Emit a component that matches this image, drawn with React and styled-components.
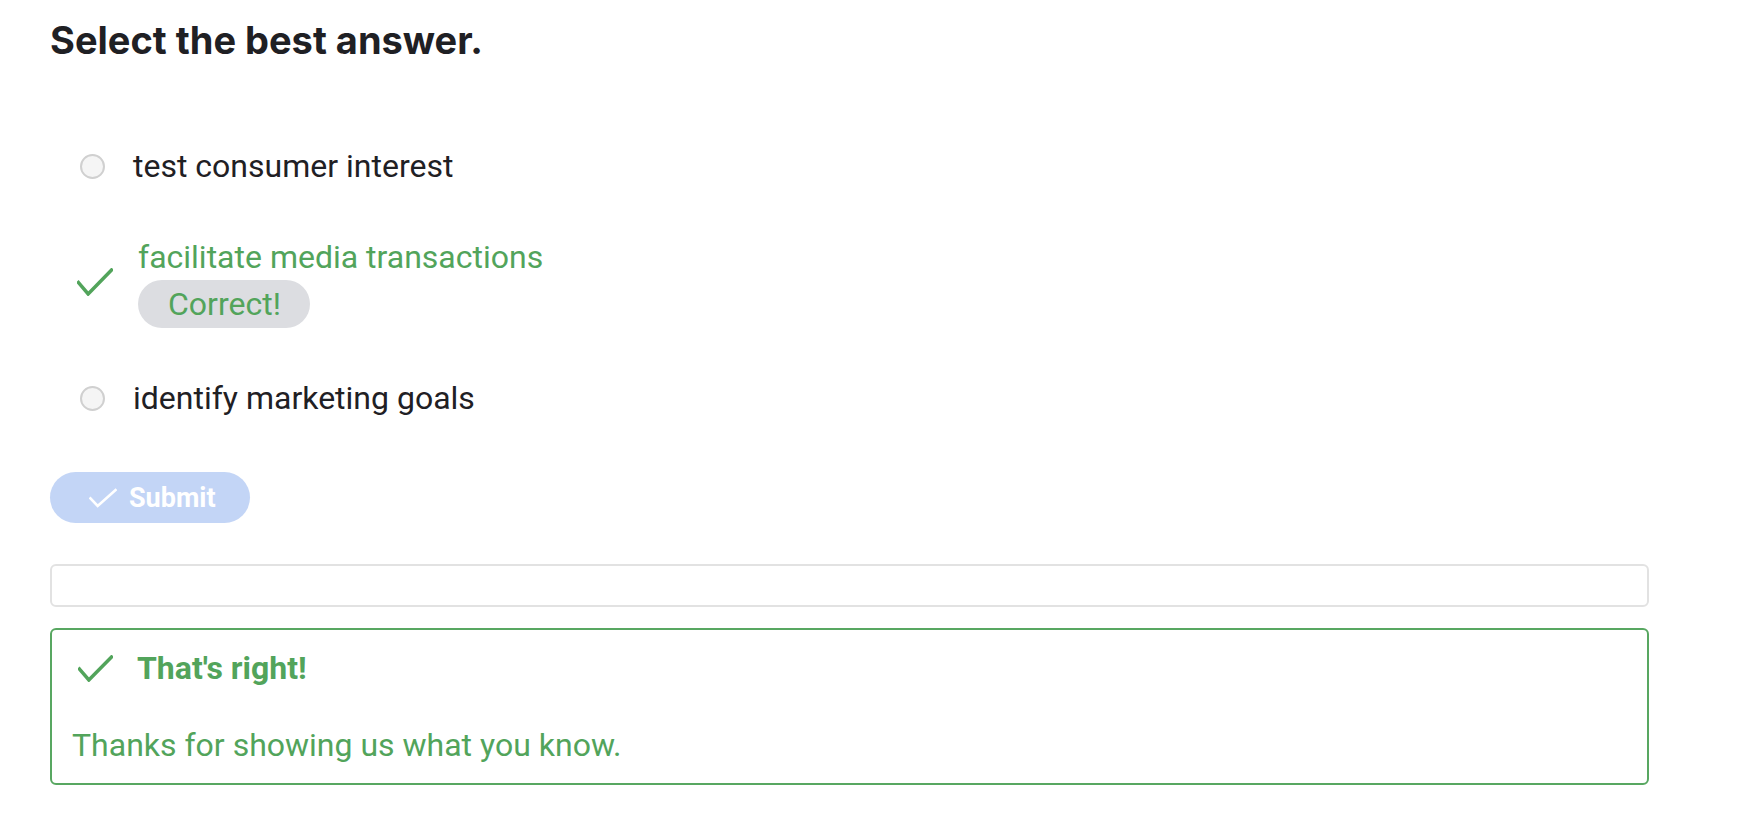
import React from 'react'
import styled, { createGlobalStyle } from 'styled-components'

const colors = {
    text: '#1f2024',
    green: '#52a45b',
    greenBorder: '#58a761',
    pill: '#dcdde1',
    submit: '#c3d5f6',
    radioBorder: '#d0d0d0',
    radioFill: '#f5f5f5',
    inputBorder: '#e2e2e2',
}

const GlobalStyles = createGlobalStyle`
    * {
        box-sizing: border-box;
        margin: 0;
        padding: 0;
    }
    body {
        background: #ffffff;
        color: ${colors.text};
        font-family: Roboto, 'Liberation Sans', sans-serif;
    }
`

const Page = styled.main`
    width: 1650px;
    padding: 18px 0 40px 50px;
`

const Heading = styled.h2`
    font-family: Inter, 'Liberation Sans', sans-serif;
    font-size: 38px;
    line-height: 44px;
    font-weight: 700;
    color: ${colors.text};
`

const Options = styled.ul`
    list-style: none;
    display: flex;
    flex-direction: column;
    gap: 52px;
    margin-top: 86px;
    padding-left: 30px;
`

const Option = styled.li`
    display: flex;
    align-items: center;
`

const Radio = styled.span`
    width: 25px;
    height: 25px;
    border-radius: 50%;
    border: 2px solid ${colors.radioBorder};
    background: ${colors.radioFill};
    margin-right: 28px;
    flex-shrink: 0;
`

const Mark = styled.span`
    display: flex;
    margin: 0 25px 0 -3px;
    flex-shrink: 0;
`

const Answer = styled.div`
    display: flex;
    flex-direction: column;
    align-items: flex-start;
`

const Label = styled.span`
    margin-top: ${props => props.$correct ? '3px' : '0'};
    font-size: 32px;
    line-height: 36px;
    color: ${props => props.$correct ? colors.green : colors.text};
`

const Pill = styled.span`
    margin-top: 5px;
    height: 48px;
    padding: 0 29px 0 30px;
    border-radius: 24px;
    background: ${colors.pill};
    color: ${colors.green};
    font-size: 32px;
    line-height: 48px;
`

const SubmitButton = styled.button`
    display: flex;
    align-items: center;
    gap: 12px;
    width: 200px;
    height: 51px;
    margin-top: 56px;
    padding-left: 39px;
    border: none;
    border-radius: 26px;
    background: ${colors.submit};
    color: #ffffff;
    font-family: Roboto, 'Liberation Sans', sans-serif;
    font-size: 27px;
    font-weight: 700;
    cursor: default;
`

const AnswerField = styled.div`
    width: 1599px;
    height: 43px;
    margin-top: 41px;
    border: 2px solid ${colors.inputBorder};
    border-radius: 6px;
`

const Feedback = styled.section`
    width: 1599px;
    margin-top: 21px;
    padding: 20px 20px 20px 20px;
    border: 2px solid ${colors.greenBorder};
    border-radius: 6px;
    color: ${colors.green};
`

const FeedbackTitle = styled.div`
    display: flex;
    align-items: center;
    gap: 24px;
    padding-left: 6px;
    font-size: 32px;
    line-height: 36px;
    font-weight: 700;
`

const FeedbackText = styled.p`
    margin-top: 41px;
    font-size: 32px;
    line-height: 36px;
`

const Check = ({ width = 36, height = 28, stroke = colors.green, weight = 3.5 }) => (
    <svg width={width} height={height} viewBox={`0 0 ${width} ${height}`} fill="none">
        <polyline
            points={`1.5,${height * 0.52} ${width * 0.31},${height - 2} ${width - 1.5},2`}
            stroke={stroke}
            strokeWidth={weight}
            strokeLinecap="square"
            strokeLinejoin="miter"
        />
    </svg>
)

const answers = [
    { text: 'test consumer interest' },
    { text: 'facilitate media transactions', correct: true },
    { text: 'identify marketing goals' },
]

export default function App() {
    return (
        <>
            <GlobalStyles />
            <Page>
                <Heading>Select the best answer.</Heading>
                <Options>
                    {answers.map(answer => (
                        <Option key={answer.text}>
                            {answer.correct ? (
                                <Mark><Check /></Mark>
                            ) : (
                                <Radio />
                            )}
                            <Answer>
                                <Label $correct={answer.correct}>{answer.text}</Label>
                                {answer.correct && <Pill>Correct!</Pill>}
                            </Answer>
                        </Option>
                    ))}
                </Options>
                <SubmitButton>
                    <Check width={28} height={20} stroke="#ffffff" weight={2.6} />
                    Submit
                </SubmitButton>
                <AnswerField />
                <Feedback>
                    <FeedbackTitle>
                        <Check width={35} height={27} />
                        That's right!
                    </FeedbackTitle>
                    <FeedbackText>Thanks for showing us what you know.</FeedbackText>
                </Feedback>
            </Page>
        </>
    )
}
